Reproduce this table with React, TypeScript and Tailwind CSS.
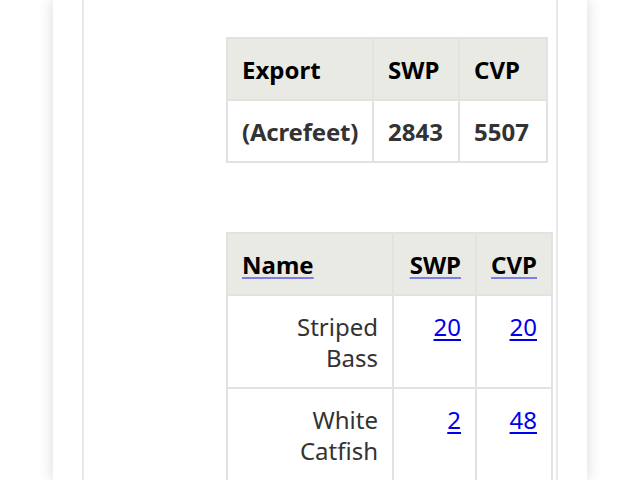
import React from "react";

const th = "border-2 border-[#e2e2e2] bg-[#eaeae5] px-[14px] pt-[15px] pb-[14px] font-bold text-black leading-[31px]";
const td = "border-2 border-[#e2e2e2] px-[14px] pt-[15px] pb-[14px] leading-[31px] align-top";

export default function App() {
  return (
    <div className="h-[480px] w-[640px] overflow-hidden bg-white" style={{ fontFamily: '"Noto Sans", "Open Sans", sans-serif' }}>
      <div className="ml-[53px] h-full w-[534px] bg-white px-[29px] shadow-[0_0_14px_rgba(0,0,0,0.16)]">
        <div className="h-full border-x-2 border-[#e8e8e8] pt-[37px] pl-[142px] text-[24px]">
          <table className="w-[320px] table-fixed border-collapse">
            <colgroup>
              <col className="w-[146px]" />
              <col className="w-[86px]" />
              <col className="w-[88px]" />
            </colgroup>
            <thead>
              <tr>
                <th className={th + " text-left"}>Export</th>
                <th className={th + " text-left"}>SWP</th>
                <th className={th + " text-left"}>CVP</th>
              </tr>
            </thead>
            <tbody>
              <tr>
                <td className={td + " whitespace-nowrap font-bold tracking-[-0.2px] text-[#333]"}>(Acrefeet)</td>
                <td className={td + " font-bold text-[#333]"}>2843</td>
                <td className={td + " font-bold text-[#333]"}>5507</td>
              </tr>
            </tbody>
          </table>
          <table className="mt-[69px] w-[325px] table-fixed border-collapse">
            <colgroup>
              <col className="w-[166px]" />
              <col className="w-[83px]" />
              <col className="w-[76px]" />
            </colgroup>
            <thead>
              <tr>
                <th className={th + " text-left"}>
                  <a href="#" className="text-black underline decoration-[#7c7cf0] decoration-2 underline-offset-[3px]">Name</a>
                </th>
                <th className={th + " text-right"}>
                  <a href="#" className="text-black underline decoration-[#7c7cf0] decoration-2 underline-offset-[3px]">SWP</a>
                </th>
                <th className={th + " text-right"}>
                  <a href="#" className="text-black underline decoration-[#7c7cf0] decoration-2 underline-offset-[3px]">CVP</a>
                </th>
              </tr>
            </thead>
            <tbody>
              <tr>
                <td className={td + " text-right text-[#333]"}>Striped<br />Bass</td>
                <td className={td + " text-right"}><a href="#" className="text-[#0000ee] underline underline-offset-[3px]">20</a></td>
                <td className={td + " text-right"}><a href="#" className="text-[#0000ee] underline underline-offset-[3px]">20</a></td>
              </tr>
              <tr>
                <td className={td + " text-right text-[#333]"}>White<br />Catfish</td>
                <td className={td + " text-right"}><a href="#" className="text-[#0000ee] underline underline-offset-[3px]">2</a></td>
                <td className={td + " text-right"}><a href="#" className="text-[#0000ee] underline underline-offset-[3px]">48</a></td>
              </tr>
            </tbody>
          </table>
        </div>
      </div>
    </div>
  );
}
